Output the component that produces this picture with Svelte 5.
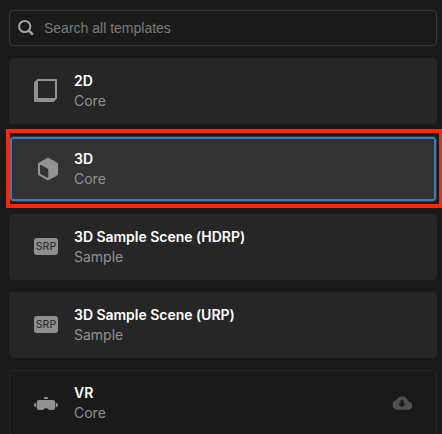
<script>
  const templates = [
    { name: '2D', kind: 'Core', icon: 'square' },
    { name: '3D', kind: 'Core', icon: 'cube', selected: true },
    { name: '3D Sample Scene (HDRP)', kind: 'Sample', icon: 'srp' },
    { name: '3D Sample Scene (URP)', kind: 'Sample', icon: 'srp' },
    { name: 'VR', kind: 'Core', icon: 'vr', remote: true },
  ];
</script>

<div class="panel">
  <label class="search">
    <svg width="18" height="18" viewBox="0 0 18 18" fill="none" stroke="#a4a4a4" stroke-width="2">
      <circle cx="6.7" cy="7.5" r="5.6" />
      <path d="M10.8 11.6 L14.9 15.6" stroke-width="2.2" />
    </svg>
    <span>Search all templates</span>
  </label>

  {#each templates as t}
    <div class="card" class:selected={t.selected} class:remote={t.remote}>
      <div class="icon">
        {#if t.icon === 'square'}
          <svg width="24" height="24" viewBox="0 0 24 24">
            <path fill="#929292" fill-rule="evenodd" d="M3.4 0H22Q23 0 23 1V19.6L19.6 23H1.5Q0 23 0 21.5V3.4ZM4 2V19H21V2Z" />
          </svg>
        {:else if t.icon === 'cube'}
          <svg class="cube" width="20" height="24" viewBox="0 0 20 24">
            <path fill="#929292" stroke="#929292" stroke-linejoin="round" d="M10 1L19.5 6.3V17.7L10 23L.5 17.7V6.3Z" />
            <path fill="#333" d="M2 9Q2 7.5 3.3 8.1L9.3 11.4Q10.3 12 10.3 13V19.4Q10.3 21.3 8.8 20.5L3 17.2Q2 16.6 2 15.5Z" />
          </svg>
        {:else if t.icon === 'srp'}
          <span class="srp">SRP</span>
        {:else}
          <svg class="vr" width="24" height="14" viewBox="0 0 24 14" fill="#929292">
            <path d="M10 2V1.2Q10 0 11.2 0H12.8Q14 0 14 1.2V2Z" />
            <path d="M5 3H19Q21.3 3 21.3 5.3V10.7Q21.3 13 19 13H16Q14.8 13 14.2 12.3L13.4 11.5Q12 10.6 10.6 11.5L9.8 12.3Q9.2 13 8 13H5Q2.7 13 2.7 10.7V5.3Q2.7 3 5 3Z" />
            <path d="M2 5.8V10.2Q0 9.8 0 8Q0 6.2 2 5.8ZM22 5.8V10.2Q24 9.8 24 8Q24 6.2 22 5.8Z" />
          </svg>
        {/if}
      </div>
      <div class="text">
        <div class="name">{t.name}</div>
        <div class="kind">{t.kind}</div>
      </div>
      {#if t.remote}
        <svg class="cloud" width="20" height="14" viewBox="0 0 20 14">
          <path fill="#505050" fill-rule="evenodd" d="M16.2 5.3A6.3 6.3 0 0 0 4.5 3.8A5.1 5.1 0 0 0 5 13.8H15.8A4.25 4.25 0 0 0 16.2 5.3ZM8.4 4.3H11.6V7.5H14L10 11.4L6 7.5H8.4Z" />
        </svg>
      {/if}
    </div>
  {/each}
  <div class="highlight"></div>
</div>

<style>
  .panel {
    position: relative;
    box-sizing: border-box;
    width: 442px;
    height: 434px;
    padding: 10px 5px 0 9px;
    overflow: hidden;
    background: #1a1a1a;
    font-family: Inter, "Liberation Sans", sans-serif;
  }
  .search {
    display: flex;
    align-items: center;
    box-sizing: border-box;
    height: 36px;
    margin-bottom: 12px;
    padding-left: 8px;
    border: 1px solid #373737;
    border-radius: 4px;
    gap: 8px;
    color: #7b7b7b;
    font: 14px/20px "Liberation Sans", Arial, sans-serif;
  }
  .card {
    display: flex;
    align-items: center;
    box-sizing: border-box;
    height: 66px;
    margin-bottom: 12px;
    padding: 0 24px;
    border: 1px solid #262626;
    border-radius: 4px;
    background: #262626;
  }
  .selected {
    border-color: #3a3a3a;
    background: #333;
    box-shadow: inset 0 0 0 2px #3a79c4;
  }
  .remote {
    background: #1a1a1a;
  }
  .icon {
    display: flex;
    flex: none;
    width: 24px;
    margin-right: 16px;
  }
  .cube {
    margin: 0 0 1px 4px;
  }
  .vr {
    margin-top: 1px;
  }
  .srp {
    width: 24px;
    height: 17px;
    margin-bottom: 1px;
    border-radius: 3px;
    background: #8f8f8f;
    color: #303030;
    font-size: 10.5px;
    font-weight: 500;
    line-height: 17px;
    text-align: center;
  }
  .text {
    flex: 1;
    font-size: 14px;
    line-height: 20px;
    white-space: nowrap;
  }
  .name {
    color: #fff;
    font-weight: 600;
    letter-spacing: -0.03px;
  }
  .kind {
    color: #929292;
  }
  .highlight {
    position: absolute;
    top: 129px;
    left: 6px;
    box-sizing: border-box;
    width: 436px;
    height: 79px;
    border: 4px solid #ff2600;
    border-right-width: 3px;
  }
</style>
